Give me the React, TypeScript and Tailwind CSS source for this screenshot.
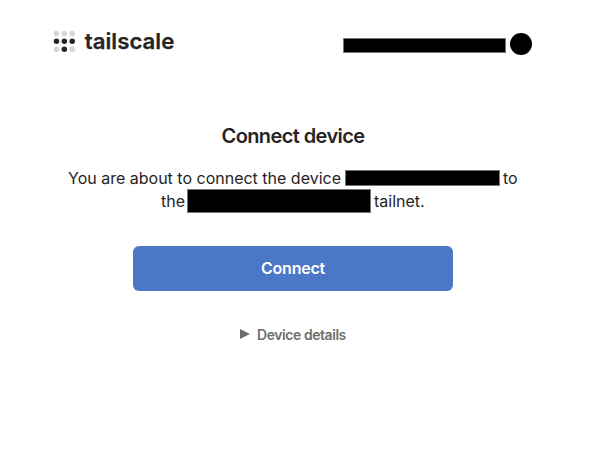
const dots = [
  ['#d6d4d4', '#d6d4d4', '#d6d4d4'],
  ['#242424', '#242424', '#242424'],
  ['#d6d4d4', '#242424', '#d6d4d4'],
];

function Logo() {
  return (
    <svg className="block h-[30px] w-[124px]" viewBox="0 0 124 30" role="img" aria-label="tailscale">
      {dots.map((row, y) =>
        row.map((fill, x) => (
          <circle key={`${x}-${y}`} cx={3.5 + x * 7.85} cy={6.4 + y * 7.95} r={2.75} fill={fill} />
        )),
      )}
      <text
        x="31.8"
        y="22.2"
        textLength="89.5"
        lengthAdjust="spacingAndGlyphs"
        className="font-['Inter',sans-serif] text-[22px] font-semibold"
        fill="#242424"
        stroke="#242424"
        strokeWidth="0.25"
      >
        tailscale
      </text>
    </svg>
  );
}

function Account() {
  return (
    <div className="mt-[6px] flex items-center">
      <span className="mt-[3px] h-[15px] w-[163px] border border-[#777] bg-black" />
      <span className="ml-[4px] h-[22px] w-[22px] rounded-full bg-black" />
    </div>
  );
}

export default function App() {
  return (
    <div className="h-[455px] w-[597px] overflow-hidden bg-white font-['Inter',sans-serif] text-[#242424]">
      <header className="flex h-[85px] items-start justify-between pt-[27px] pr-[65px] pl-[53px]">
        <Logo />
        <Account />
      </header>
      <main className="flex w-[586px] flex-col items-center pt-[37px]">
        <h1 className="text-[20px] leading-[28px] font-semibold tracking-[-0.6px]">Connect device</h1>
        <div className="mt-[17px] w-full text-[16px] leading-[23px]">
          <p className="flex h-[23px] items-start pl-[68px] whitespace-nowrap">
            <span>You are about to connect the device</span>
            <span className="mt-[3px] ml-[4px] h-[16px] w-[155px] border border-[#777] bg-black" />
            <span className="ml-[3px]">to</span>
          </p>
          <p className="flex h-[23px] items-start pl-[161px] whitespace-nowrap">
            <span>the</span>
            <span className="-mt-px ml-[2px] h-[24px] w-[184px] border border-[#777] bg-black" />
            <span className="ml-[3px]">tailnet.</span>
          </p>
        </div>
        <button className="mt-[33px] h-[45px] w-[320px] rounded-md bg-[#4b77c7] pb-[2px] text-[16px] font-semibold tracking-[-0.2px] text-white">
          Connect
        </button>
        <button className="mt-[33px] flex h-[20px] items-center text-[14px] font-semibold tracking-[-0.45px] text-[#706e6d]">
          <svg className="mr-[7px] h-[10px] w-[10px]" viewBox="0 0 10 10" fill="currentColor">
            <path d="M0 0 10 5 0 10Z" />
          </svg>
          Device details
        </button>
      </main>
    </div>
  );
}
